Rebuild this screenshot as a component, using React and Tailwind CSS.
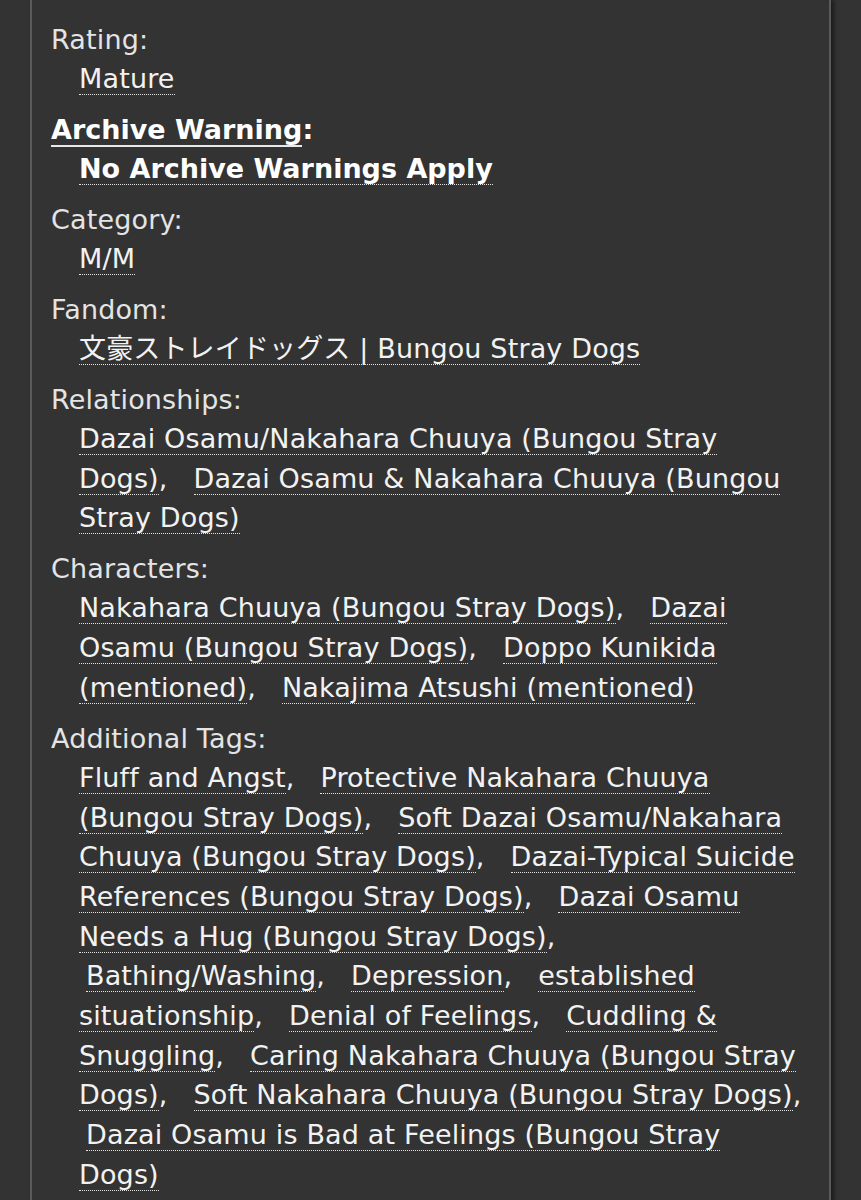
import React from "react";

const Tag = ({ children, lead = false, bold = false }) => (
  <a
    href="#"
    className={
      "text-[#f2f2f2] border-b border-dotted border-[#e2e2e2] no-underline " +
      (lead ? "ml-[7px] " : "") +
      (bold ? "font-bold tracking-normal text-white" : "")
    }
  >
    {children}
  </a>
);

const Sep = () => (
  <>
    <span>,</span>
    <span className="inline-block w-[26px]"></span>
  </>
);

const Comma = () => <span>,</span>;

const Label = ({ children }) => (
  <dt className="leading-[38px] text-[#e4e4e4]">{children}</dt>
);

const Value = ({ children }) => (
  <dd className="ml-[28px] mb-[12.3px] leading-[39.7px] whitespace-nowrap">{children}</dd>
);

export default function App() {
  return (
    <div
      className="min-h-[1200px] bg-[#333333] text-[#f0f0f0] flex text-[27px] tracking-[0.15px] overflow-hidden"
      style={{ fontFamily: '"DejaVu Sans", "Noto Sans CJK JP", sans-serif' }}
    >
      <div className="ml-[30px] w-[801px] border-x-2 border-[#5a5a5a] shadow-[3px_0_4px_rgba(0,0,0,0.45)] pl-[19px] pt-[21px]">
        <dl>
          <Label>Rating:</Label>
          <Value>
            <Tag>Mature</Tag>
          </Value>

          <dt className="leading-[38px] font-bold text-white tracking-normal">
            <span className="border-b-2 border-[#e8e8e8]">Archive Warning</span>:
          </dt>
          <Value>
            <Tag bold>No Archive Warnings Apply</Tag>
          </Value>

          <Label>Category:</Label>
          <Value>
            <Tag>M/M</Tag>
          </Value>

          <Label>Fandom:</Label>
          <Value>
            <Tag>文豪ストレイドッグス | Bungou Stray Dogs</Tag>
          </Value>

          <Label>Relationships:</Label>
          <Value>
            <Tag>
              Dazai Osamu/Nakahara Chuuya (Bungou Stray
              <br />
              Dogs)
            </Tag>
            <Sep />
            <Tag>
              Dazai Osamu &amp; Nakahara Chuuya (Bungou
              <br />
              Stray Dogs)
            </Tag>
          </Value>

          <Label>Characters:</Label>
          <Value>
            <Tag>Nakahara Chuuya (Bungou Stray Dogs)</Tag>
            <Sep />
            <Tag>
              Dazai
              <br />
              Osamu (Bungou Stray Dogs)
            </Tag>
            <Sep />
            <Tag>
              Doppo Kunikida
              <br />
              (mentioned)
            </Tag>
            <Sep />
            <Tag>Nakajima Atsushi (mentioned)</Tag>
          </Value>

          <Label>Additional Tags:</Label>
          <Value>
            <Tag>Fluff and Angst</Tag>
            <Sep />
            <Tag>
              Protective Nakahara Chuuya
              <br />
              (Bungou Stray Dogs)
            </Tag>
            <Sep />
            <Tag>
              Soft Dazai Osamu/Nakahara
              <br />
              Chuuya (Bungou Stray Dogs)
            </Tag>
            <Sep />
            <Tag>
              Dazai-Typical Suicide
              <br />
              References (Bungou Stray Dogs)
            </Tag>
            <Sep />
            <Tag>
              Dazai Osamu
              <br />
              Needs a Hug (Bungou Stray Dogs)
            </Tag>
            <Comma />
            <br />
            <Tag lead>Bathing/Washing</Tag>
            <Sep />
            <Tag>Depression</Tag>
            <Sep />
            <Tag>
              established
              <br />
              situationship
            </Tag>
            <Sep />
            <Tag>Denial of Feelings</Tag>
            <Sep />
            <Tag>
              Cuddling &amp;
              <br />
              Snuggling
            </Tag>
            <Sep />
            <Tag>
              Caring Nakahara Chuuya (Bungou Stray
              <br />
              Dogs)
            </Tag>
            <Sep />
            <Tag>Soft Nakahara Chuuya (Bungou Stray Dogs)</Tag>
            <Comma />
            <br />
            <Tag lead>
              Dazai Osamu is Bad at Feelings (Bungou Stray
              <br />
              Dogs)
            </Tag>
          </Value>
        </dl>
      </div>
    </div>
  );
}
